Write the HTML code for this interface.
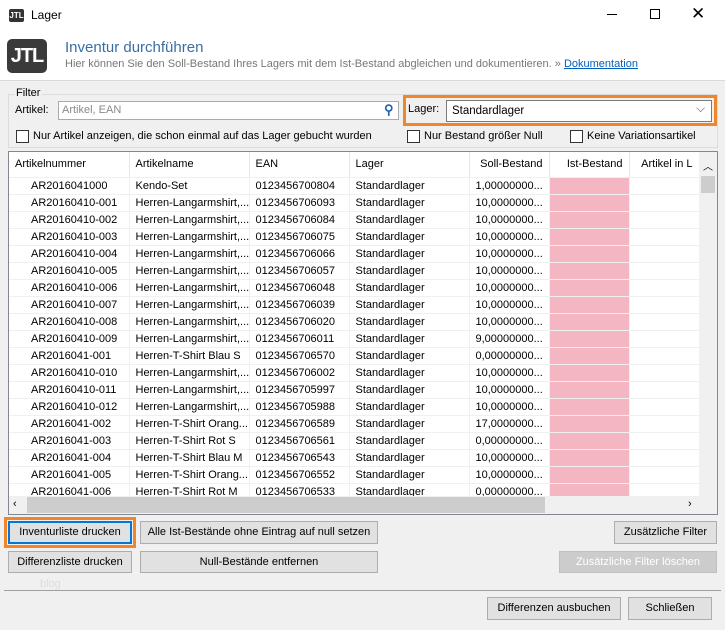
<!DOCTYPE html><html><head><meta charset="utf-8"><style>
*{box-sizing:border-box}body{margin:0;width:725px;height:630px;overflow:hidden;background:#f0f0f0;font-family:"Liberation Sans",sans-serif;font-size:11px;color:#000;position:relative}
.a{position:absolute}
.btn{position:absolute;background:#e1e1e1;border:1px solid #adadad;text-align:center;line-height:20px;font-size:11px;white-space:nowrap}
.cb{position:absolute;width:13px;height:13px;border:1px solid #333;background:#fff}
table{border-collapse:collapse;table-layout:fixed;font-size:11px}
td{height:17px;padding:0 6px;white-space:nowrap;overflow:hidden;border-bottom:1px solid #f0f0f0;border-right:1px solid #f0f0f0}
</style></head><body>
<div class="a" style="left:0;top:0;width:725px;height:81px;background:#fff;border-bottom:1px solid #d9d9d9"></div>
<div class="a" style="left:9px;top:9px;width:15px;height:13px;background:#333;border-radius:2px;color:#fff;font-size:8px;font-weight:bold;text-align:center;line-height:13px">JTL</div>
<div class="a" style="left:31px;top:8px;font-size:12px">Lager</div>
<div class="a" style="left:607px;top:14px;width:10px;height:1px;background:#000"></div>
<div class="a" style="left:650px;top:9px;width:10px;height:10px;border:1px solid #000"></div>
<div class="a" style="left:691px;top:4px;font-size:17px">✕</div>
<div class="a" style="left:7px;top:39px;width:40px;height:34px;background:#3a3a3a;border-radius:5px;color:#fff;font-weight:bold;font-size:20px;text-align:center;line-height:34px;letter-spacing:-1px">JTL</div>
<div class="a" style="left:65px;top:39px;font-size:15px;color:#3a6ea5">Inventur durchführen</div>
<div class="a" style="left:65px;top:58px;font-size:11px;color:#777">Hier können Sie den Soll-Bestand Ihres Lagers mit dem Ist-Bestand abgleichen und dokumentieren. » <span style="color:#0060c0;text-decoration:underline">Dokumentation</span></div>
<div class="a" style="left:8px;top:94px;width:710px;height:54px;border:1px solid #dcdcdc"></div>
<div class="a" style="left:14px;top:87px;background:#f0f0f0;padding:0 2px">Filter</div>
<div class="a" style="left:15px;top:104px">Artikel:</div>
<div class="a" style="left:58px;top:101px;width:341px;height:19px;border:1px solid #aaa;background:#fff;color:#888;padding:2px 3px">Artikel, EAN</div>
<div class="a" style="left:384px;top:102px;color:#2060b0;font-size:13px;font-weight:bold">⚲</div>
<div class="a" style="left:403px;top:95px;width:314px;height:31px;border:3px solid #f0862a"></div>
<div class="a" style="left:408px;top:103px">Lager:</div>
<div class="a" style="left:446px;top:100px;width:266px;height:22px;border:1px solid #7a7a7a;background:#fff;padding:4px 5px;font-size:11.5px">Standardlager<span style="position:absolute;right:6px;top:2px;color:#555">⌵</span></div>
<div class="cb" style="left:16px;top:130px"></div><div class="a" style="left:33px;top:130px">Nur Artikel anzeigen, die schon einmal auf das Lager gebucht wurden</div>
<div class="cb" style="left:407px;top:130px"></div><div class="a" style="left:424px;top:130px">Nur Bestand größer Null</div>
<div class="cb" style="left:570px;top:130px"></div><div class="a" style="left:587px;top:130px">Keine Variationsartikel</div>
<div class="a" style="left:8px;top:151px;width:710px;height:364px;border:1px solid #828790;background:#fff;overflow:hidden">
<table style="width:690px"><colgroup><col style="width:120px"><col style="width:120px"><col style="width:100px"><col style="width:120px"><col style="width:80px"><col style="width:80px"><col style="width:70px"></colgroup>
<tr style="height:25px"><td style="height:25px;border-right:1px solid #e5e5e5">Artikelnummer</td><td style="height:25px;border-right:1px solid #e5e5e5">Artikelname</td><td style="height:25px;border-right:1px solid #e5e5e5">EAN</td><td style="height:25px;border-right:1px solid #e5e5e5">Lager</td><td style="height:25px;text-align:right;border-right:1px solid #e5e5e5">Soll-Bestand</td><td style="height:25px;text-align:right;border-right:1px solid #e5e5e5">Ist-Bestand</td><td style="height:25px;text-align:right">Artikel in L</td></tr>
<tbody id="b"></tbody></table>
<div class="a" style="right:0;top:0;width:18px;height:344px;background:#f0f0f0"><div style="text-align:center;font-size:10px;margin-top:6px">︿</div><div style="margin:3px 2px;height:17px;background:#cdcdcd"></div></div>
<div class="a" style="left:0;bottom:0;width:708px;height:18px;background:#f0f0f0"><span class="a" style="left:4px;top:2px">‹</span><div class="a" style="left:18px;top:1px;width:518px;height:16px;background:#cdcdcd"></div><span class="a" style="left:679px;top:2px">›</span></div>
</div>
<div class="a" style="left:4px;top:517px;width:132px;height:31px;border:3px solid #f0862a"></div>
<div class="btn" style="left:8px;top:521px;width:124px;height:23px;border:2px solid #0078d7;line-height:19px">Inventurliste drucken</div>
<div class="btn" style="left:140px;top:521px;width:238px;height:23px">Alle Ist-Bestände ohne Eintrag auf null setzen</div>
<div class="btn" style="left:614px;top:521px;width:103px;height:23px">Zusätzliche Filter</div>
<div class="btn" style="left:8px;top:551px;width:124px;height:22px">Differenzliste drucken</div>
<div class="btn" style="left:140px;top:551px;width:238px;height:22px">Null-Bestände entfernen</div>
<div class="btn" style="left:559px;top:551px;width:158px;height:22px;background:#ccc;border-color:#bfbfbf;color:#fff">Zusätzliche Filter löschen</div>
<div class="a" style="left:40px;top:578px;color:#ddd;font-size:11px">blog</div>
<div class="a" style="left:4px;top:590px;width:717px;height:1px;background:#a0a0a0"></div>
<div class="btn" style="left:487px;top:597px;width:134px;height:23px">Differenzen ausbuchen</div>
<div class="btn" style="left:628px;top:597px;width:84px;height:23px">Schließen</div>
<script>
var r=[["AR2016041000","Kendo-Set","0123456700804","1,00000000..."],["AR20160410-001","Herren-Langarmshirt,...","0123456706093","10,0000000..."],["AR20160410-002","Herren-Langarmshirt,...","0123456706084","10,0000000..."],["AR20160410-003","Herren-Langarmshirt,...","0123456706075","10,0000000..."],["AR20160410-004","Herren-Langarmshirt,...","0123456706066","10,0000000..."],["AR20160410-005","Herren-Langarmshirt,...","0123456706057","10,0000000..."],["AR20160410-006","Herren-Langarmshirt,...","0123456706048","10,0000000..."],["AR20160410-007","Herren-Langarmshirt,...","0123456706039","10,0000000..."],["AR20160410-008","Herren-Langarmshirt,...","0123456706020","10,0000000..."],["AR20160410-009","Herren-Langarmshirt,...","0123456706011","9,00000000..."],["AR2016041-001","Herren-T-Shirt Blau S","0123456706570","0,00000000..."],["AR20160410-010","Herren-Langarmshirt,...","0123456706002","10,0000000..."],["AR20160410-011","Herren-Langarmshirt,...","0123456705997","10,0000000..."],["AR20160410-012","Herren-Langarmshirt,...","0123456705988","10,0000000..."],["AR2016041-002","Herren-T-Shirt Orang...","0123456706589","17,0000000..."],["AR2016041-003","Herren-T-Shirt Rot S","0123456706561","0,00000000..."],["AR2016041-004","Herren-T-Shirt Blau M","0123456706543","10,0000000..."],["AR2016041-005","Herren-T-Shirt Orang...","0123456706552","10,0000000..."],["AR2016041-006","Herren-T-Shirt Rot M","0123456706533","0,00000000..."]];
var h="";r.forEach(function(x){h+='<tr><td style="padding-left:22px">'+x[0]+'</td><td>'+x[1]+'</td><td>'+x[2]+'</td><td>Standardlager</td><td style="text-align:right">'+x[3]+'</td><td style="background:#f4b6c2"></td><td></td></tr>'});document.getElementById("b").innerHTML=h;
</script>
</body></html>
